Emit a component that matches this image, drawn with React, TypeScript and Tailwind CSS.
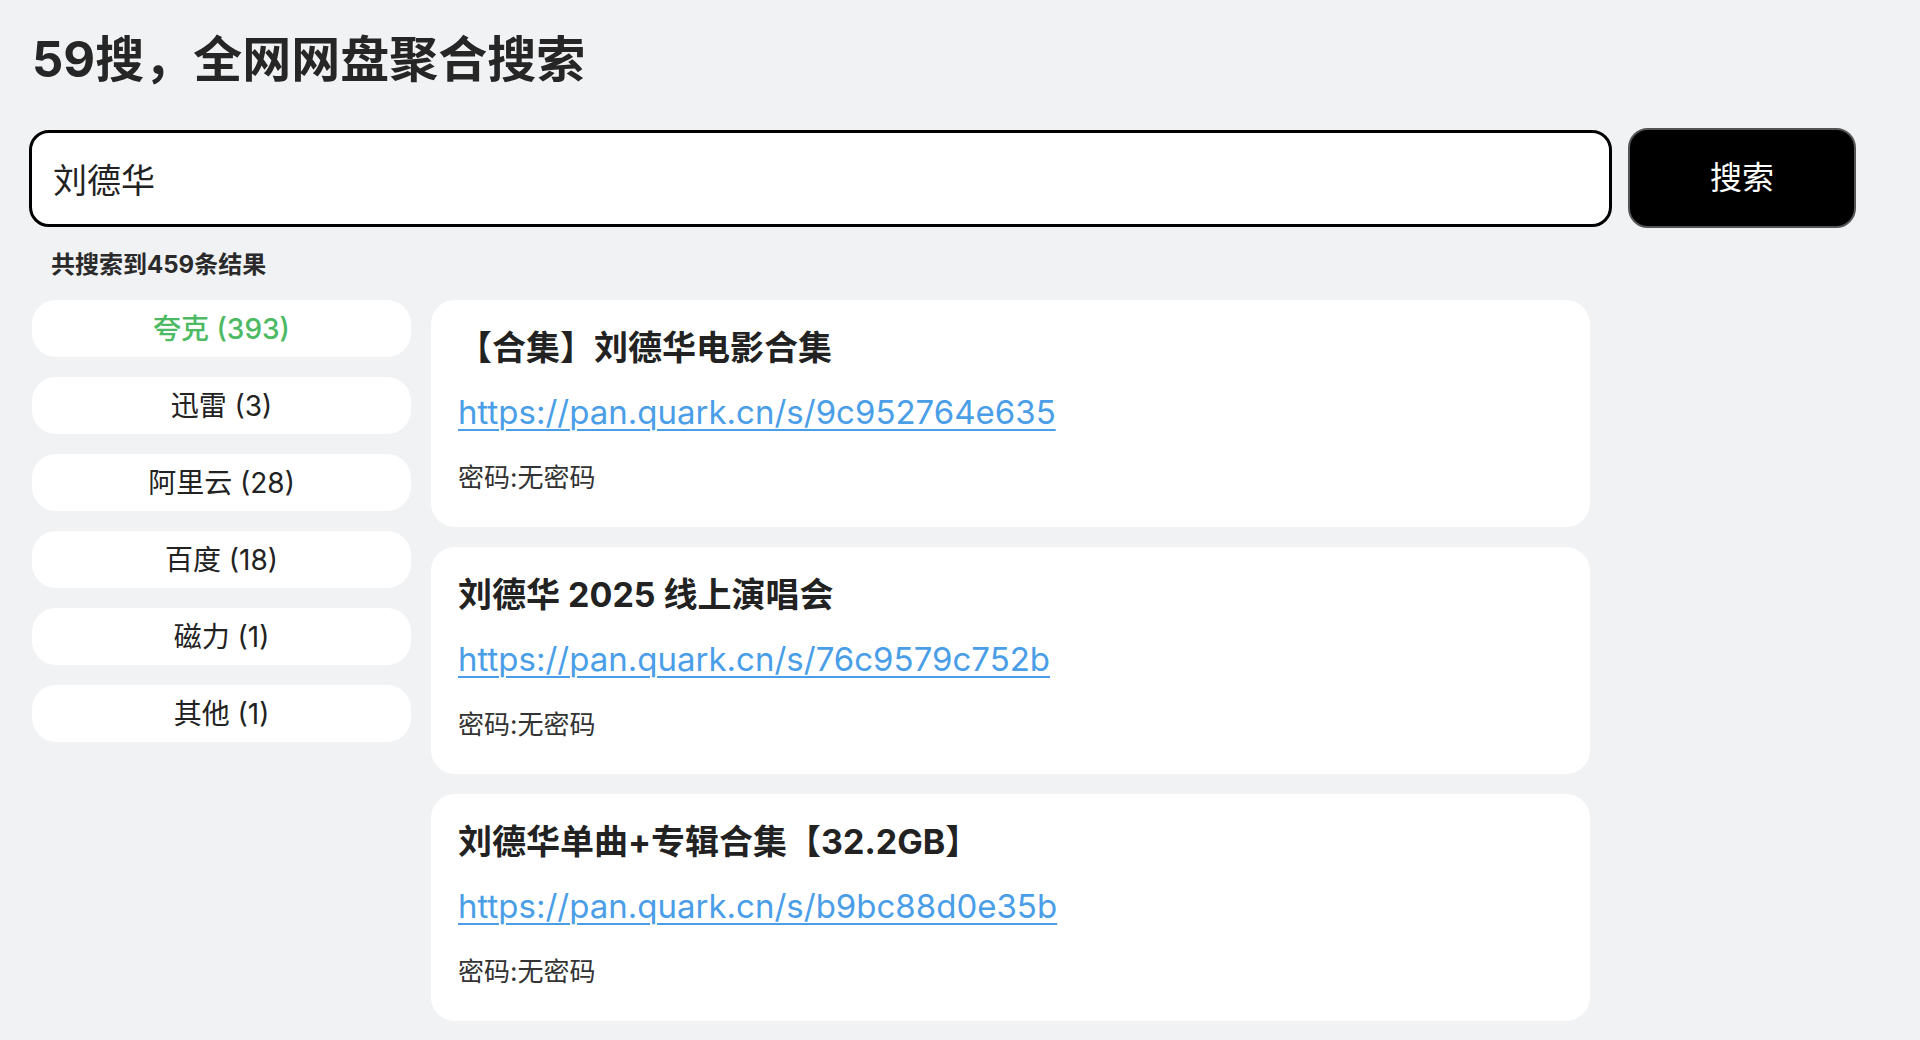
import { useState } from "react";

const tabs = [
  { name: "夸克", count: 393 },
  { name: "迅雷", count: 3 },
  { name: "阿里云", count: 28 },
  { name: "百度", count: 18 },
  { name: "磁力", count: 1 },
  { name: "其他", count: 1 },
];

const results = [
  { title: "【合集】刘德华电影合集", url: "https://pan.quark.cn/s/9c952764e635", pwd: "无密码" },
  { title: "刘德华 2025 线上演唱会", url: "https://pan.quark.cn/s/76c9579c752b", pwd: "无密码" },
  { title: "刘德华单曲+专辑合集【32.2GB】", url: "https://pan.quark.cn/s/b9bc88d0e35b", pwd: "无密码" },
];

export default function App() {
  const [query, setQuery] = useState("刘德华");
  const [active, setActive] = useState(0);

  return (
    <div
      className="min-h-screen bg-[#f1f2f4] pl-[29px] text-[#222]"
      style={{ fontFamily: 'Inter, "Noto Sans CJK SC", sans-serif' }}
    >
      <h1 className="pl-[3px] pt-[30px] text-[49px] font-bold leading-[60px] text-[#262626]">
        59搜，全网网盘聚合搜索
      </h1>

      <div className="mt-[38px] flex items-center gap-4">
        <input
          value={query}
          onChange={(e) => setQuery(e.target.value)}
          className="h-[97px] w-[1583px] rounded-[20px] border-[3px] border-black bg-white px-[21px] text-[34px] text-[#222] outline-none"
        />
        <button
          type="button"
          className="h-[100px] w-[228px] rounded-[20px] border-2 border-[#555] bg-black text-[32px] text-white"
        >
          搜索
        </button>
      </div>

      <p className="mt-[21px] pl-[22px] text-[24px] font-bold leading-[32px] text-[#2a2a2a]">
        共搜索到459条结果
      </p>

      <div className="mt-[19px] flex items-start gap-5 pl-[3px]">
        <nav className="flex w-[379px] flex-col gap-5">
          {tabs.map((t, i) => (
            <button
              key={t.name}
              type="button"
              onClick={() => setActive(i)}
              className={
                "h-[57px] rounded-[24px] bg-white text-[28px] " +
                (i === active ? "font-medium text-[#4cb963]" : "text-[#222]")
              }
            >
              {t.name} ({t.count})
            </button>
          ))}
        </nav>

        <div className="flex w-[1159px] flex-col gap-5">
          {results.map((r) => (
            <div key={r.url} className="h-[227px] rounded-[24px] bg-white px-[27px] pt-[24px]">
              <h3 className="text-[34px] font-bold leading-[48px] text-[#222]">{r.title}</h3>
              <a
                href={r.url}
                className="mt-4 block w-fit text-[33px] leading-[48px] text-[#4a9ee8] underline decoration-2 underline-offset-[5px]"
              >
                {r.url}
              </a>
              <p className="mt-6 text-[26px] leading-[36px] text-[#333]">密码:{r.pwd}</p>
            </div>
          ))}
        </div>
      </div>
    </div>
  );
}
